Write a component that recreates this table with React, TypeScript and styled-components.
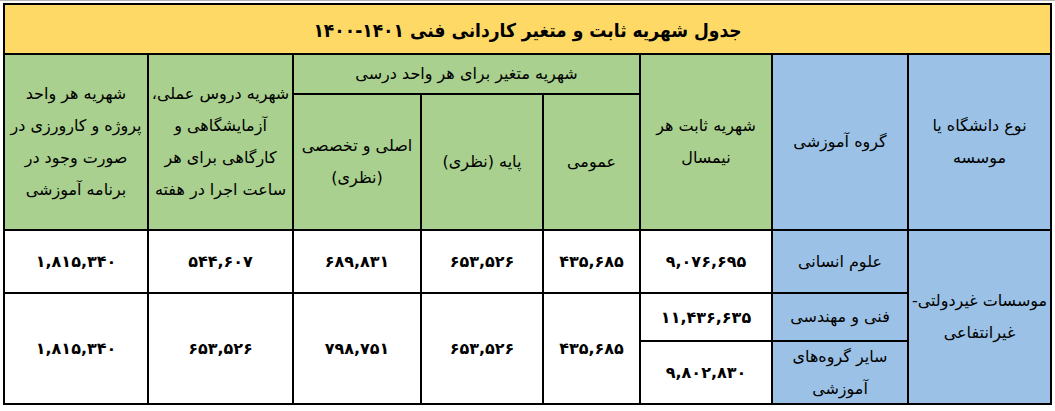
import React from "react";
import styled, { createGlobalStyle } from "styled-components";

const GlobalStyle = createGlobalStyle`
  html, body {
    margin: 0;
    padding: 0;
    background: #ffffff;
  }
  body {
    font-family: "DejaVu Sans", "Noto Sans", sans-serif;
    color: #000000;
  }
`;

const YELLOW = "#FFD966";
const GREEN = "#A9D08E";
const BLUE = "#9BC2E6";
const WHITE = "#FFFFFF";

const Page = styled.div`
  width: 1055px;
  height: 411px;
  box-sizing: border-box;
  border-top: 1px solid #b4b4b4;
  padding: 2px 0 0 3px;
  overflow: hidden;
`;

const Grid = styled.div`
  direction: rtl;
  display: grid;
  grid-template-columns: 141px 134px 130px 95px 120px 126px 143px 142px;
  grid-template-rows: 48px 38px 134px 61px 46px 61px;
  gap: 2px;
  padding: 2px;
  background: #000000;
  width: max-content;
`;

type Place = { $col: string; $row: string };

const Cell = styled.div<Place & { $bg: string }>`
  grid-column: ${(p) => p.$col};
  grid-row: ${(p) => p.$row};
  background: ${(p) => p.$bg};
  display: flex;
  align-items: center;
  justify-content: center;
  text-align: center;
  font-family: "DejaVu Sans", sans-serif;
  font-size: 16px;
  line-height: 32px;
  white-space: nowrap;
  min-width: 0;
`;

const TitleCell = styled(Cell)`
  font-family: "DejaVu Sans Condensed", "DejaVu Sans", sans-serif;
  font-weight: bold;
  font-size: 19px;
  line-height: 28px;
  padding-top: 2px;
`;

const NumCell = styled(Cell)`
  font-weight: bold;
  font-size: 16px;
  padding-top: 1px;
`;

const Year = styled.span`
  direction: ltr;
  unicode-bidi: isolate;
  margin-right: 6px;
`;

export default function App() {
  return (
    <>
      <GlobalStyle />
      <Page>
        <Grid>
          <TitleCell $bg={YELLOW} $col="1 / -1" $row="1">
            جدول شهریه ثابت و متغیر کاردانی فنی<Year>۱۴۰۰-۱۴۰۱</Year>
          </TitleCell>

          <Cell $bg={BLUE} $col="1" $row="2 / 4">
            نوع دانشگاه یا
            <br />
            موسسه
          </Cell>
          <Cell $bg={BLUE} $col="2" $row="2 / 4">
            گروه آموزشی
          </Cell>
          <Cell $bg={GREEN} $col="3" $row="2 / 4">
            شهریه ثابت هر
            <br />
            نیمسال
          </Cell>
          <Cell $bg={GREEN} $col="4 / 7" $row="2">
            شهریه متغیر برای هر واحد درسی
          </Cell>
          <Cell $bg={GREEN} $col="4" $row="3">
            عمومی
          </Cell>
          <Cell $bg={GREEN} $col="5" $row="3">
            پایه (نظری)
          </Cell>
          <Cell $bg={GREEN} $col="6" $row="3">
            اصلی و تخصصی
            <br />
            (نظری)
          </Cell>
          <Cell $bg={GREEN} $col="7" $row="2 / 4">
            شهریه دروس عملی،
            <br />
            آزمایشگاهی و
            <br />
            کارگاهی برای هر
            <br />
            ساعت اجرا در هفته
          </Cell>
          <Cell $bg={GREEN} $col="8" $row="2 / 4">
            شهریه هر واحد
            <br />
            پروژه و کارورزی در
            <br />
            صورت وجود در
            <br />
            برنامه آموزشی
          </Cell>

          <Cell $bg={BLUE} $col="1" $row="4 / 7">
            موسسات غیردولتی-
            <br />
            غیرانتفاعی
          </Cell>
          <Cell $bg={BLUE} $col="2" $row="4">
            علوم انسانی
          </Cell>
          <Cell $bg={BLUE} $col="2" $row="5">
            فنی و مهندسی
          </Cell>
          <Cell $bg={BLUE} $col="2" $row="6">
            سایر گروه‌های
            <br />
            آموزشی
          </Cell>

          <NumCell $bg={WHITE} $col="3" $row="4">۹,۰۷۶,۶۹۵</NumCell>
          <NumCell $bg={WHITE} $col="3" $row="5">۱۱,۴۳۶,۶۳۵</NumCell>
          <NumCell $bg={WHITE} $col="3" $row="6">۹,۸۰۲,۸۳۰</NumCell>

          <NumCell $bg={WHITE} $col="4" $row="4">۴۳۵,۶۸۵</NumCell>
          <NumCell $bg={WHITE} $col="4" $row="5 / 7">۴۳۵,۶۸۵</NumCell>

          <NumCell $bg={WHITE} $col="5" $row="4">۶۵۳,۵۲۶</NumCell>
          <NumCell $bg={WHITE} $col="5" $row="5 / 7">۶۵۳,۵۲۶</NumCell>

          <NumCell $bg={WHITE} $col="6" $row="4">۶۸۹,۸۳۱</NumCell>
          <NumCell $bg={WHITE} $col="6" $row="5 / 7">۷۹۸,۷۵۱</NumCell>

          <NumCell $bg={WHITE} $col="7" $row="4">۵۴۴,۶۰۷</NumCell>
          <NumCell $bg={WHITE} $col="7" $row="5 / 7">۶۵۳,۵۲۶</NumCell>

          <NumCell $bg={WHITE} $col="8" $row="4">۱,۸۱۵,۳۴۰</NumCell>
          <NumCell $bg={WHITE} $col="8" $row="5 / 7">۱,۸۱۵,۳۴۰</NumCell>
        </Grid>
      </Page>
    </>
  );
}
